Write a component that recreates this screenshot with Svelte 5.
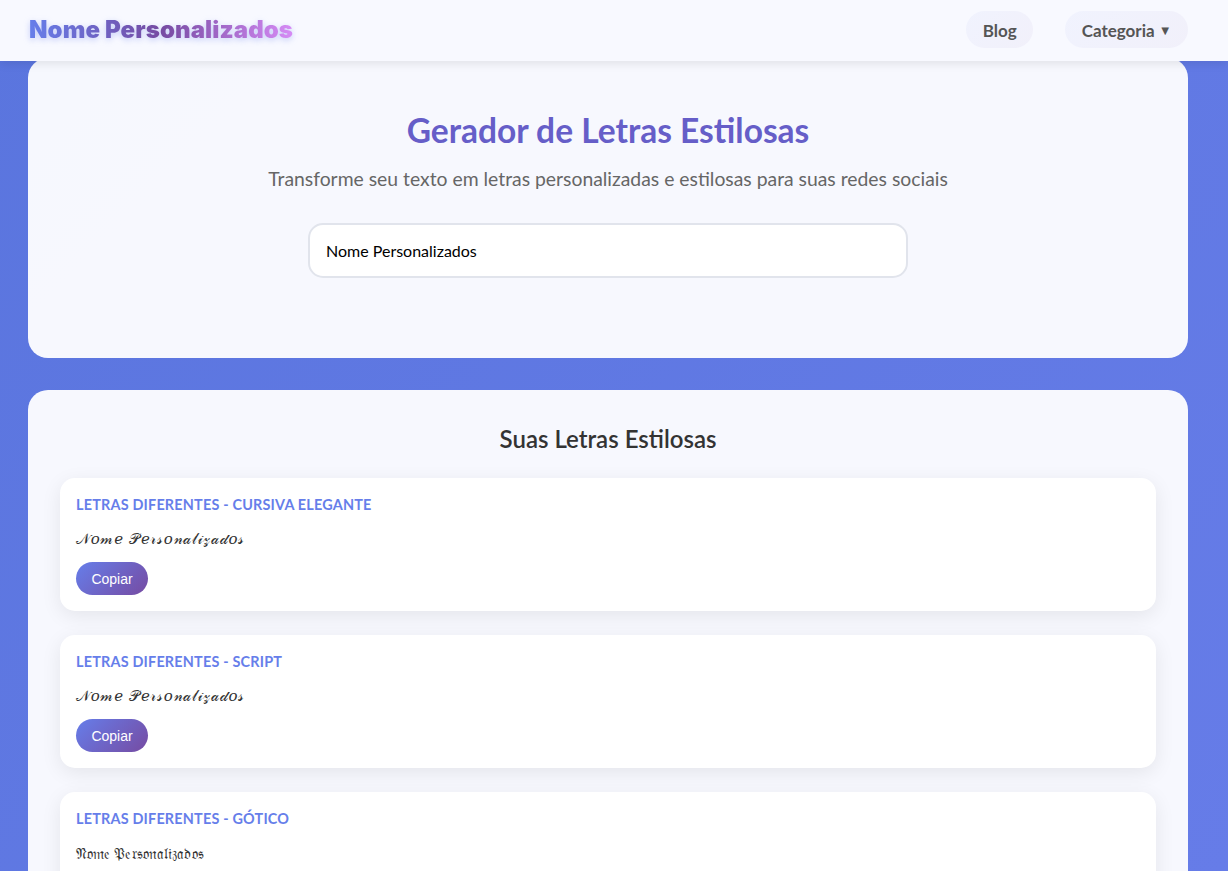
<script lang="ts">
  const styles = [
    { name: 'Letras Diferentes - Cursiva Elegante', text: '𝒩𝑜𝓂𝑒 𝒫𝑒𝓇𝓈𝑜𝓃𝒶𝓁𝒾𝓏𝒶𝒹𝑜𝓈', kind: 'script' },
    { name: 'Letras Diferentes - Script', text: '𝒩𝑜𝓂𝑒 𝒫𝑒𝓇𝓈𝑜𝓃𝒶𝓁𝒾𝓏𝒶𝒹𝑜𝓈', kind: 'script' },
    { name: 'Letras Diferentes - Gótico', text: '𝔑𝔬𝔪𝔢 𝔓𝔢𝔯𝔰𝔬𝔫𝔞𝔩𝔦𝔷𝔞𝔡𝔬𝔰', kind: 'gothic' }
  ];

  let input = $state('Nome Personalizados');
</script>

<header class="topbar">
  <a class="logo" href="#top">Nome Personalizados</a>
  <nav>
    <a class="pill" href="#blog">Blog</a>
    <button class="pill" type="button">Categoria <span class="caret">▼</span></button>
  </nav>
</header>

<main>
  <section class="card hero">
    <h1>Gerador de Letras Estilosas</h1>
    <p>Transforme seu texto em letras personalizadas e estilosas para suas redes sociais</p>
    <input type="text" bind:value={input} />
  </section>

  <section class="card results">
    <h2>Suas Letras Estilosas</h2>
    {#each styles as style}
      <article class="item">
        <h3>{style.name}</h3>
        <div class="styled {style.kind}">{style.text}</div>
        <button class="copy" type="button">Copiar</button>
      </article>
    {/each}
  </section>
</main>

<style>
  :global(body) {
    height: 871px;
    overflow: hidden;
    background: linear-gradient(135deg, #5a75de 0%, #667ce8 100%);
    font-family: 'Lato', 'Open Sans', sans-serif;
  }
  .topbar {
    position: relative;
    z-index: 2;
    height: 61px;
    box-sizing: border-box;
    padding: 0 40px 2px 28px;
    display: flex;
    align-items: center;
    justify-content: space-between;
    background: #f8f9ff;
    box-shadow: 0 2px 10px rgba(0, 0, 0, 0.1);
  }
  .logo {
    font-family: 'Inter', sans-serif;
    font-size: 24px;
    font-weight: 900;
    letter-spacing: 0.1px;
    margin-left: 1px;
    text-decoration: none;
    background: linear-gradient(90deg, #667eea, #764ba2 50%, #d68bf5);
    -webkit-background-clip: text;
    background-clip: text;
    color: transparent;
    filter: drop-shadow(0 2px 3px rgba(102, 126, 234, 0.35));
  }
  nav {
    display: flex;
    gap: 32px;
  }
  .pill {
    height: 37px;
    padding: 1px 16.5px 0;
    display: flex;
    align-items: center;
    gap: 4px;
    box-sizing: border-box;
    border: none;
    border-radius: 19px;
    background: linear-gradient(135deg, rgba(102, 126, 234, 0.05), rgba(118, 75, 162, 0.05));
    color: #555;
    font-family: inherit;
    font-size: 17px;
    font-weight: 700;
    text-decoration: none;
  }
  .caret {
    font-size: 13px;
  }
  main {
    margin-top: -3px;
    padding: 0 40px 0 28px;
    display: flex;
    flex-direction: column;
    gap: 32px;
  }
  .card {
    background: rgba(255, 255, 255, 0.95);
    border-radius: 20px;
  }
  .hero {
    height: 300px;
    box-sizing: border-box;
    padding-top: 50px;
    display: flex;
    flex-direction: column;
    align-items: center;
  }
  h1 {
    margin: 0;
    font-size: 33.5px;
    line-height: 44px;
    font-weight: 700;
    color: #665ec8;
  }
  .hero p {
    margin: 14px 0 0;
    font-size: 19.35px;
    line-height: 26px;
    color: #666;
  }
  input {
    margin-top: 31px;
    width: 600px;
    height: 55px;
    box-sizing: border-box;
    padding: 0 16px;
    border: 2px solid #e1e4ec;
    border-radius: 15px;
    background: #fff;
    color: #000;
    font-family: inherit;
    font-size: 16px;
  }
  .results {
    padding: 32px;
  }
  h2 {
    margin: 0 0 22px;
    text-align: center;
    font-size: 24px;
    line-height: 34px;
    font-weight: 600;
    color: #333;
  }
  .item {
    margin-bottom: 24px;
    height: 133px;
    box-sizing: border-box;
    padding: 17px 16px 16px;
    border-radius: 15px;
    background: #fff;
    box-shadow: 0 5px 20px rgba(0, 0, 0, 0.08);
  }
  h3 {
    margin: 0;
    font-size: 14.4px;
    line-height: 20px;
    font-weight: 700;
    letter-spacing: 0.2px;
    text-transform: uppercase;
    color: #667eea;
  }
  .styled {
    margin-top: 12px;
    line-height: 24px;
    color: #333;
  }
  .script {
    font-family: 'DejaVu Serif', serif;
    font-size: 15px;
    letter-spacing: 0.7px;
  }
  .gothic {
    font-size: 15px;
    letter-spacing: 0.1px;
  }
  .copy {
    margin-top: 11px;
    display: block;
    width: 72px;
    height: 33px;
    border: none;
    border-radius: 17px;
    background: linear-gradient(135deg, #667eea, #764ba2);
    color: #fff;
    font-family: 'Liberation Sans', sans-serif;
    font-size: 14px;
  }
</style>
